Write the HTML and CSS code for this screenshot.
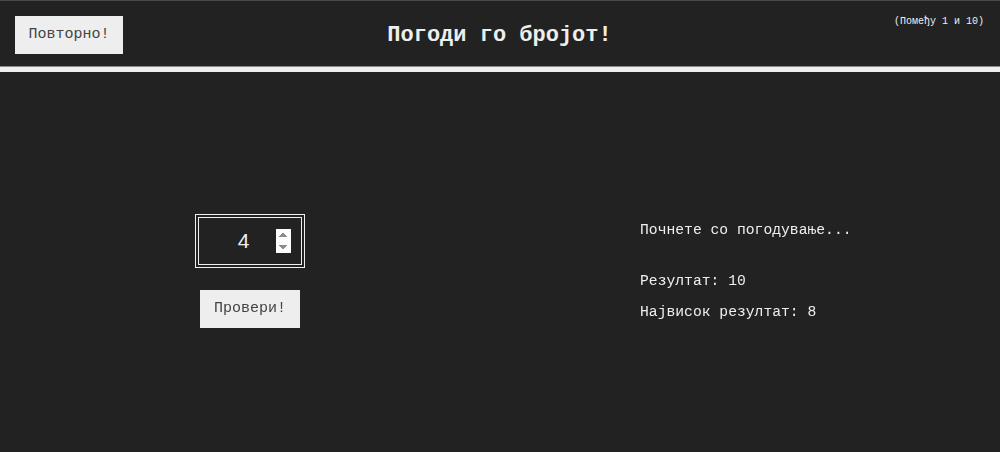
FILE: index.html
```html
<!DOCTYPE html>
<html lang="mk">
<head>
<meta charset="utf-8">
<title>Погоди го бројот!</title>
<link rel="stylesheet" href="styles.css">
</head>
<body>
<header class="header">
  <button class="btn again">Повторно!</button>
  <h1 class="title">Погоди го бројот!</h1>
  <p class="between">(Помеђу 1 и 10)</p>
</header>
<main class="main">
  <section class="left">
    <input type="number" class="guess" value="4" autofocus>
    <button class="btn check">Провери!</button>
  </section>
  <section class="right">
    <p class="message">Почнете со погодување...</p>
    <p class="label-score">Резултат: <span class="score">10</span></p>
    <p class="label-highscore">Највисок резултат: <span class="highscore">8</span></p>
  </section>
</main>
</body>
</html>
```

FILE: styles.css
```css
* {
  margin: 0;
  padding: 0;
  box-sizing: border-box;
}

html, body {
  height: 100%;
}

body {
  background-color: #222;
  color: #eee;
  font-family: "Courier New", "Nimbus Mono PS", "FreeMono", "Liberation Mono", monospace;
  overflow: hidden;
}

.header {
  display: grid;
  grid-template-columns: 1fr auto 1fr;
  grid-template-rows: 50px;
  align-items: start;
  height: 72px;
  padding: 15px 16px 0 15px;
  border-top: 1px solid #4a4a4a;
  border-bottom: 5px solid #eee;
  box-shadow: inset 0 -1px 0 #8a8a8a;
}

.title {
  font-size: 22px;
  font-weight: 700;
  line-height: 26px;
  text-align: center;
  color: #eee;
  margin-top: 7px;
}

.between {
  justify-self: end;
  font-size: 10px;
  line-height: 11px;
  color: #eee;
}

.btn {
  border: none;
  background-color: #eee;
  color: #444;
  font-family: inherit;
  font-size: 15px;
  line-height: 18px;
  padding: 10px 13.5px;
  cursor: pointer;
}

.again {
  justify-self: start;
}

.main {
  display: grid;
  grid-template-columns: 1fr 1fr;
  align-items: center;
  height: 380px;
  padding-top: 18px;
}

.left {
  display: flex;
  flex-direction: column;
  align-items: center;
  gap: 22px;
}

.guess {
  width: 110px;
  height: 54px;
  background: transparent;
  border: 4px double #eee;
  color: #eee;
  font-family: "Liberation Sans", Arial, sans-serif;
  font-size: 21px;
  text-align: center;
  padding: 0 10px 0 12px;
  outline: none;
  caret-color: #eee;
}

.right {
  padding-left: 140px;
  font-size: 14.7px;
  line-height: 17px;
}

.message {
  margin-bottom: 34px;
}

.label-score {
  margin-bottom: 14px;
}
```
